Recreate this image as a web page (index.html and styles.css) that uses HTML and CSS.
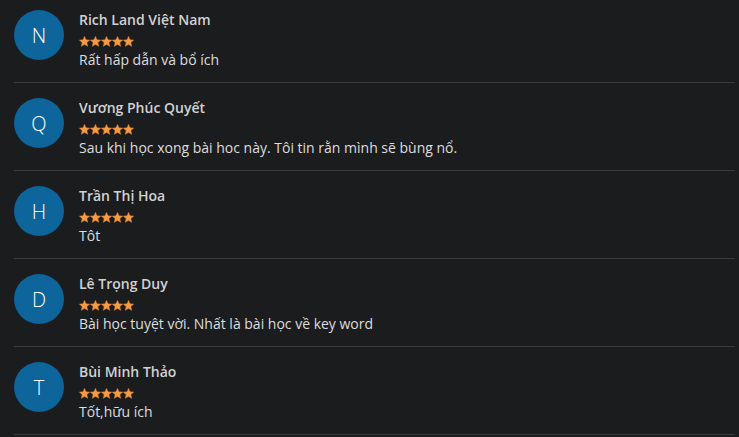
FILE: index.html
```html
<!DOCTYPE html>
<html lang="vi">
<head>
    <meta charset="UTF-8">
    <meta name="viewport" content="width=device-width, initial-scale=1.0">
    <title>Đánh giá</title>
    <link rel="stylesheet" href="styles.css">
</head>
<body>
    <svg width="0" height="0" class="defs">
        <defs>
            <path id="star" d="M5.5 0.2 L7.05 3.7 L10.8 4.05 L7.95 6.6 L8.8 10.4 L5.5 8.45 L2.2 10.4 L3.05 6.6 L0.2 4.05 L3.95 3.7 Z"/>
            <g id="five-stars">
                <use href="#star" x="0"/>
                <use href="#star" x="11"/>
                <use href="#star" x="22"/>
                <use href="#star" x="33"/>
                <use href="#star" x="44"/>
            </g>
        </defs>
    </svg>

    <div class="reviews">
        <div class="review">
            <div class="avatar">N</div>
            <div class="review-body">
                <div class="name">Rich Land Việt Nam</div>
                <svg class="stars" width="56" height="11" viewBox="0 0 56 11"><use href="#five-stars"/></svg>
                <div class="comment">Rất hấp dẫn và bổ ích</div>
            </div>
        </div>
        <div class="review">
            <div class="avatar">Q</div>
            <div class="review-body">
                <div class="name">Vương Phúc Quyết</div>
                <svg class="stars" width="56" height="11" viewBox="0 0 56 11"><use href="#five-stars"/></svg>
                <div class="comment">Sau khi học xong bài hoc này. Tôi tin rằn mình sẽ bùng nổ.</div>
            </div>
        </div>
        <div class="review">
            <div class="avatar">H</div>
            <div class="review-body">
                <div class="name">Trần Thị Hoa</div>
                <svg class="stars" width="56" height="11" viewBox="0 0 56 11"><use href="#five-stars"/></svg>
                <div class="comment">Tôt</div>
            </div>
        </div>
        <div class="review">
            <div class="avatar">D</div>
            <div class="review-body">
                <div class="name">Lê Trọng Duy</div>
                <svg class="stars" width="56" height="11" viewBox="0 0 56 11"><use href="#five-stars"/></svg>
                <div class="comment">Bài học tuyệt vời. Nhất là bài học về key word</div>
            </div>
        </div>
        <div class="review">
            <div class="avatar">T</div>
            <div class="review-body">
                <div class="name">Bùi Minh Thảo</div>
                <svg class="stars" width="56" height="11" viewBox="0 0 56 11"><use href="#five-stars"/></svg>
                <div class="comment">Tốt,hữu ích</div>
            </div>
        </div>
    </div>
</body>
</html>
```

FILE: styles.css
```css
/* Danh sách đánh giá */
body {
    font-family: 'Open Sans', sans-serif;
    background-color: #1b1c1e;
    margin: 0;
    padding: 0 4px 0 14px;
    color: #dcdcdc;
}

.defs {
    position: absolute;
}

.reviews {
    margin-top: -5px;
}

.review {
    display: flex;
    align-items: flex-start;
    gap: 15px;
    height: 50px;
    padding: 15px 0 22px;
    border-bottom: 1px solid #3b3c3e;
}

.avatar {
    width: 50px;
    height: 50px;
    flex-shrink: 0;
    border-radius: 50%;
    background-color: #0e659c;
    color: #fff;
    font-size: 20px;
    font-weight: 300;
    display: flex;
    align-items: center;
    justify-content: center;
}

.review-body {
    display: flex;
    flex-direction: column;
}

.name {
    font-size: 14px;
    font-weight: 600;
    line-height: 20px;
    color: #d2d2d2;
}

.stars {
    display: block;
    margin: 6px 0 4px;
    fill: #f59a45;
    stroke: #d9772c;
    stroke-width: 0.4;
}

.comment {
    font-size: 14px;
    line-height: 18px;
    color: #dedede;
}
```
